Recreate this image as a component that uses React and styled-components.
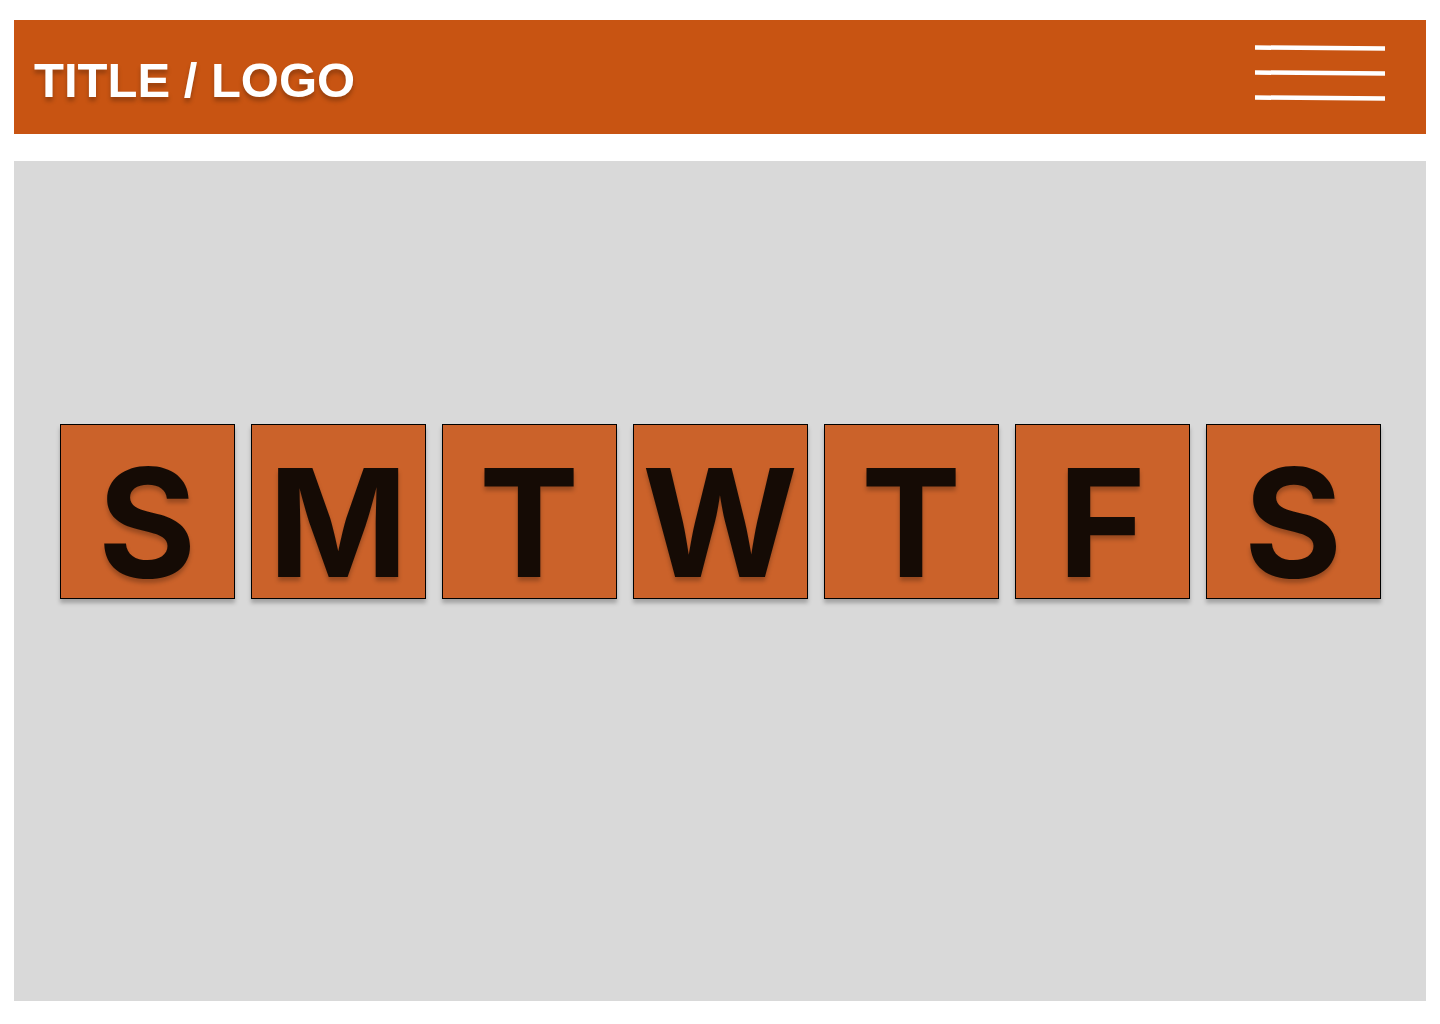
import React from "react";
import styled, { createGlobalStyle } from "styled-components";

const Global = createGlobalStyle`
  html, body { margin: 0; padding: 0; background: #ffffff; }
  body { font-family: "Liberation Sans", Arial, sans-serif; }
`;

const Page = styled.div`
  width: 1440px;
  height: 1024px;
  box-sizing: border-box;
  padding: 20px 14px 0 14px;
  display: flex;
  flex-direction: column;
  gap: 27px;
`;

const Header = styled.header`
  height: 114px;
  background: #c85412;
  display: flex;
  align-items: center;
  justify-content: space-between;
  padding: 0 41px 0 20px;
  box-sizing: border-box;
`;

const Title = styled.h1`
  margin: 0;
  padding-top: 7px;
  font-family: "Liberation Sans", Arial, sans-serif;
  font-weight: 700;
  font-size: 49px;
  line-height: 1;
  color: #ffffff;
  text-shadow: 0 4px 4px rgba(0, 0, 0, 0.25);
`;

const Burger = styled.button`
  background: none;
  border: none;
  padding: 0;
  width: 130px;
  height: 56px;
  margin-top: -8px;
  cursor: pointer;
  display: block;
`;

const Main = styled.main`
  height: 840px;
  background: #d9d9d9;
  display: flex;
  justify-content: center;
  align-items: flex-start;
  padding-top: 263px;
  box-sizing: border-box;
`;

const Row = styled.div`
  display: flex;
  gap: 16px;
`;

const Tile = styled.div`
  width: 175px;
  height: 175px;
  box-sizing: border-box;
  background: #cb622a;
  border: 1px solid #000000;
  box-shadow: 0 4px 4px rgba(0, 0, 0, 0.25);
  display: flex;
  align-items: center;
  justify-content: center;
  padding-top: 22px;
  font-family: Inter, "Noto Sans", sans-serif;
  font-weight: 700;
  font-size: 150px;
  line-height: 1;
  color: #150b05;
  text-shadow: 0 4px 4px rgba(0, 0, 0, 0.25);
`;

const days = ["S", "M", "T", "W", "T", "F", "S"];

export default function App() {
  return (
    <>
      <Global />
      <Page>
        <Header>
          <Title>TITLE / LOGO</Title>
          <Burger aria-label="Menu">
            <svg width="130" height="56" viewBox="0 0 130 56">
              <path d="M0 2.5 L130 3.5" stroke="#ffffff" strokeWidth="4.5" />
              <path d="M0 27.5 L130 28.5" stroke="#ffffff" strokeWidth="4.5" />
              <path d="M0 52.5 L130 53.5" stroke="#ffffff" strokeWidth="4.5" />
            </svg>
          </Burger>
        </Header>
        <Main>
          <Row>
            {days.map((d, i) => (
              <Tile key={i}>{d}</Tile>
            ))}
          </Row>
        </Main>
      </Page>
    </>
  );
}
